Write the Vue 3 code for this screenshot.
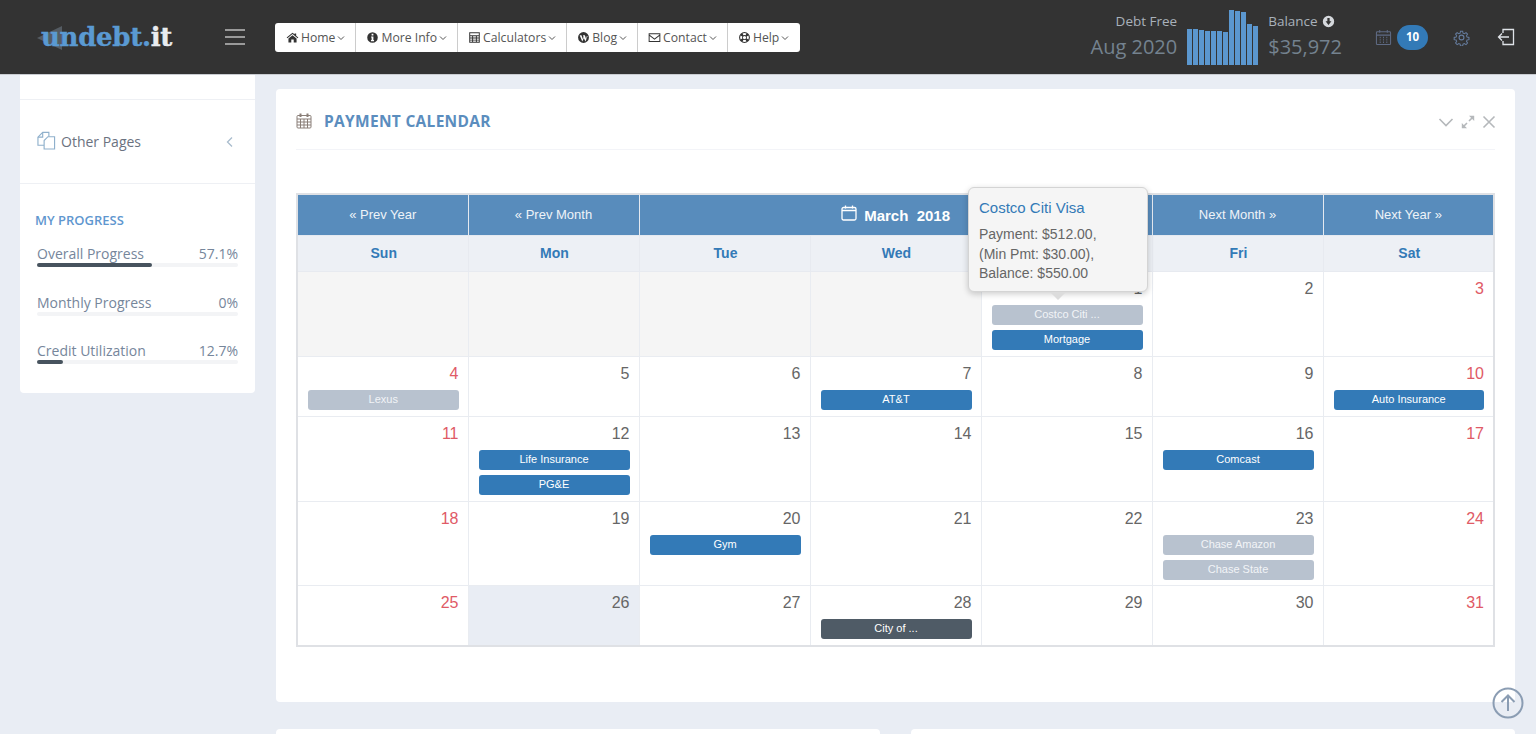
<template>
  <div class="page">
    <header class="topbar">
      <div class="logo"><span class="logo-blue">undebt.</span><span class="logo-white">it</span></div>
      <div class="burger"><span></span><span></span><span></span></div>
      <nav class="menu">
        <a v-for="item in menu" :key="item.label" class="menu-item">
          <svg class="menu-icon" viewBox="0 0 16 16"><path fill-rule="evenodd" :d="item.icon" /></svg>
          {{ item.label }}
          <svg class="caret" viewBox="0 0 8 6"><path d="M1 1.5l3 3 3-3" /></svg>
        </a>
      </nav>
      <div class="stats">
        <div class="stat stat-right">
          <div class="stat-label">Debt Free</div>
          <div class="stat-value">Aug 2020</div>
        </div>
        <div class="chart">
          <span v-for="(bar, index) in bars" :key="index" :style="{ height: bar + 'px' }"></span>
        </div>
        <div class="stat">
          <div class="stat-label">
            Balance
            <svg class="down-icon" viewBox="0 0 16 16"><path fill-rule="evenodd" d="M8 1a7 7 0 1 0 0 14A7 7 0 0 0 8 1zM6.600 3.800h2.800v4h2.200L8 12.200 4.400 7.800h2.200z" /></svg>
          </div>
          <div class="stat-value">$35,972</div>
        </div>
      </div>
      <div class="tools">
        <svg class="tool-cal" viewBox="0 0 18 18">
          <rect x="1.500" y="3" width="15" height="13.500" rx="1" />
          <path d="M1.500 6.500h15M5 1v3M13 1v3" />
          <path class="dots" d="M5 9h1M8.500 9h1M12 9h1M5 11.500h1M8.500 11.500h1M12 11.500h1M5 14h1M8.500 14h1M12 14h1" />
        </svg>
        <span class="badge">10</span>
        <svg class="tool-gear" viewBox="0 0 24 24">
          <circle cx="12" cy="12" r="3.400" />
          <path d="M10.300 2h3.400l.6 3 2.100.9 2.600-1.700 2.400 2.400-1.700 2.600.9 2.100 3 .6v3.400l-3 .6-.9 2.100 1.700 2.600-2.400 2.400-2.600-1.700-2.100.9-.6 3h-3.400l-.6-3-2.100-.9-2.600 1.700-2.400-2.400 1.700-2.600-.9-2.100-3-.6v-3.400l3-.6.9-2.100-1.700-2.600 2.400-2.400 2.600 1.700 2.100-.9z" transform="translate(1.300 1.300) scale(.9)" />
        </svg>
        <svg class="tool-exit" viewBox="0 0 18 18">
          <path d="M6 5V1.500h10.500v15H6V13M12 9H1.500M5 5.500L1.500 9 5 12.500" />
        </svg>
      </div>
    </header>

    <div class="content">
      <aside class="sidebar">
        <div class="side-spacer"></div>
        <div class="side-link">
          <svg class="pages-icon" viewBox="0 0 20 20">
            <path d="M12.500 6V1.500H6L1 6.500v8.500h6.500" />
            <path d="M6 1.500V6.500H1" />
            <path class="front" d="M11.500 6H18.500V19H7.500V10z" />
          </svg>
          <span>Other Pages</span>
          <svg class="side-chevron" viewBox="0 0 8 12"><path d="M6 1.500L1.500 6 6 10.500" /></svg>
        </div>
        <div class="progress-box">
          <h4>MY PROGRESS</h4>
          <div v-for="row in progress" :key="row.label" class="progress-row">
            <div class="progress-text"><span>{{ row.label }}</span><span>{{ row.value }}</span></div>
            <div class="progress-track"><div class="progress-fill" :style="{ width: row.width + '%' }"></div></div>
          </div>
        </div>
      </aside>

      <main class="main">
        <section class="panel">
          <div class="panel-head">
            <svg class="panel-cal" viewBox="0 0 16 16">
              <rect x="1" y="2.500" width="14" height="12.500" rx="1" />
              <path d="M1 6h14M1 9h14M1 12h14M4.500 6v9M8 6v9M11.500 6v9" />
              <path class="rings" d="M4.500 .5v3.500M11.500 .5v3.500" />
            </svg>
            <h2>PAYMENT CALENDAR</h2>
            <div class="panel-tools">
              <svg width="16" height="16" viewBox="0 0 16 16"><path d="M1.500 5l6.500 6.500L14.500 5" /></svg>
              <svg width="14" height="14" viewBox="0 0 14 14"><path d="M8 6l4.500-4.500M2 12l4-4" /><path class="solid" d="M8 .8h5.200V6zM.8 8v5.200H6z" /></svg>
              <svg width="14" height="14" viewBox="0 0 14 14"><path d="M1.500 1.500l11 11M12.500 1.500l-11 11" /></svg>
            </div>
          </div>

          <div class="calendar-wrap">
            <table class="calendar">
              <thead>
                <tr class="nav-row">
                  <th>« Prev Year</th>
                  <th>« Prev Month</th>
                  <th colspan="3" class="month">
                    <svg class="month-icon" viewBox="0 0 16 16">
                      <rect x="1" y="2.500" width="14" height="12.500" rx="1.500" />
                      <path d="M1 5.500h14M4.500 .5v3M11.500 .5v3" />
                    </svg>
                    March &nbsp;2018
                  </th>
                  <th>Next Month »</th>
                  <th>Next Year »</th>
                </tr>
                <tr class="day-row">
                  <th v-for="day in days" :key="day">{{ day }}</th>
                </tr>
              </thead>
              <tbody>
                <tr v-for="(week, w) in weeks" :key="w">
                  <td
                    v-for="(cell, c) in week"
                    :key="c"
                    :class="{ empty: !cell.day, today: cell.day === 26, weekend: c === 0 || c === 6 }"
                  >
                    <div class="num">{{ cell.day }}</div>
                    <div v-for="ev in cell.events" :key="ev.name" class="event" :class="ev.type">{{ ev.name }}</div>
                  </td>
                </tr>
              </tbody>
            </table>

            <div class="popover">
              <h3>Costco Citi Visa</h3>
              <p>Payment: $512.00,<br />(Min Pmt: $30.00),<br />Balance: $550.00</p>
            </div>
          </div>
        </section>

        <div class="lower">
          <section class="lower-card"></section>
          <section class="lower-card"></section>
        </div>
      </main>
    </div>

    <a class="to-top">
      <svg viewBox="0 0 32 32"><circle cx="16" cy="16" r="14.500" /><path d="M16 24V9M9.500 15L16 8.500l6.500 6.500" /></svg>
    </a>
  </div>
</template>

<script setup>
const menu = [
  { label: 'Home', icon: 'M8 2L.8 8l.9 1L8 3.800 14.300 9l.9-1L12.500 5.800V3h-2v1.100zM3 9.300L8 5.200l5 4.100V14H9.500v-3.500h-3V14H3z' },
  { label: 'More Info', icon: 'M8 1.500a6.500 6.500 0 1 0 0 13 6.500 6.500 0 0 0 0-13zM6.900 3.500h2.200v2H6.900zM6.300 6.700h2.800v4.400h.8v1.400H6.100v-1.400h.8V8.100h-.6z' },
  { label: 'Calculators', icon: 'M1.500 1.500h13v13h-13zM2.700 2.700v2.600h10.600V2.700zM2.700 6.500v1.600h2.400V6.500zM6.300 6.500v1.600h3.400V6.500zM10.900 6.500v1.600h2.400V6.500zM2.700 9.100v1.600h2.400V9.100zM6.300 9.100v1.600h3.400V9.100zM10.900 9.100v1.600h2.400V9.100zM2.700 11.700v1.600h2.400v-1.600zM6.300 11.700v1.600h3.400v-1.600zM10.900 11.700v1.600h2.400v-1.600z' },
  { label: 'Blog', icon: 'M8 1.300a6.700 6.700 0 1 0 0 13.400A6.700 6.700 0 0 0 8 1.300zM3.300 5.200h2.200l1.600 4.700.9-2.600-.6-2.100h2.300l1.500 4.700.9-3.700h1L10.400 13 8.400 8.700 6.500 13z' },
  { label: 'Contact', icon: 'M.8 2.800h14.400v10.700H.8zM2 4v.7l6 4.500 6-4.500V4zM2 6.200v6.100h12V6.200l-6 4.500z' },
  { label: 'Help', icon: 'M8 1.300a6.700 6.700 0 1 0 0 13.400A6.700 6.700 0 0 0 8 1.300zM5.600 3.200A5.400 5.400 0 0 1 10.400 3.200L9.300 5.300A3 3 0 0 0 6.700 5.300zM12.800 5.600A5.400 5.400 0 0 1 12.800 10.400L10.700 9.300A3 3 0 0 0 10.700 6.700zM10.400 12.800A5.400 5.400 0 0 1 5.600 12.800L6.700 10.700A3 3 0 0 0 9.300 10.700zM3.200 10.400A5.400 5.400 0 0 1 3.200 5.600L5.300 6.700A3 3 0 0 0 5.300 9.300zM8 6a2 2 0 1 0 0 4 2 2 0 0 0 0-4z' },
];

const bars = [36, 36, 35, 34, 34, 34, 33, 55, 54, 53, 41, 39];

const progress = [
  { label: 'Overall Progress', value: '57.1%', width: 57.1 },
  { label: 'Monthly Progress', value: '0%', width: 0 },
  { label: 'Credit Utilization', value: '12.7%', width: 12.7 },
];

const days = ['Sun', 'Mon', 'Tue', 'Wed', 'Thu', 'Fri', 'Sat'];

const paid = (name) => ({ name, type: 'paid' });
const due = (name) => ({ name, type: 'due' });

const events = {
  1: [paid('Costco Citi ...'), due('Mortgage')],
  4: [paid('Lexus')],
  7: [due('AT&T')],
  10: [due('Auto Insurance')],
  12: [due('Life Insurance'), due('PG&E')],
  16: [due('Comcast')],
  20: [due('Gym')],
  23: [paid('Chase Amazon'), paid('Chase State')],
  28: [{ name: 'City of ...', type: 'dark' }],
};

// March 2018 starts on a Thursday
const weeks = [];
for (let w = 0; w < 5; w++) {
  const week = [];
  for (let c = 0; c < 7; c++) {
    const n = w * 7 + c - 3;
    week.push(n > 0 ? { day: n, events: events[n] || [] } : { day: null, events: [] });
  }
  weeks.push(week);
}
</script>

<style>
html,
body {
  margin: 0;
  height: 734px;
  overflow: hidden;
  background: #e9edf4;
}
</style>

<style scoped>
.page {
  height: 734px;
  overflow: hidden;
  font-family: "Open Sans", "Liberation Sans", sans-serif;
  background: #e9edf4;
}

.topbar {
  display: flex;
  align-items: center;
  height: 75px;
  background: #333;
  border-bottom: 1px solid #c9ccd1;
  box-sizing: border-box;
}

.logo {
  position: relative;
  margin-left: 41px;
  width: 184px;
  font-family: "DejaVu Serif", serif;
  font-weight: 700;
  font-size: 26px;
  letter-spacing: -0.3px;
  -webkit-text-stroke: 0.4px;
}

/* faint arrow behind the first letters */
.logo::before {
  content: "";
  position: absolute;
  left: -4px;
  top: 4px;
  border-top: 12px solid transparent;
  border-bottom: 12px solid transparent;
  border-right: 25px solid #555c63;
}

.logo-blue,
.logo-white {
  position: relative;
}

.logo-blue {
  color: #5a9ad3;
}

.logo-white {
  color: #e9ecf0;
}

.burger {
  display: flex;
  flex-direction: column;
  gap: 5px;
  width: 20px;
  margin-right: 30px;
}

.burger span {
  height: 2px;
  background: #9a9a9a;
}

.menu {
  display: flex;
  height: 29px;
  margin-top: 1px;
  background: #fff;
  border-radius: 3px;
}

.menu-item {
  display: flex;
  align-items: center;
  gap: 2px;
  padding: 0 10px;
  font-size: 12.2px;
  color: #555;
  border-left: 1px solid #ccc;
}

.menu-item:first-child {
  padding-left: 11px;
  border-left: none;
}

.menu-item:last-child {
  padding-right: 11px;
}

.menu-icon {
  width: 13px;
  height: 13px;
  fill: #333;
}

.caret {
  width: 8px;
  height: 6px;
  fill: none;
  stroke: #555;
  stroke-width: 1;
}

.stats {
  display: flex;
  align-items: flex-end;
  margin-left: auto;
  height: 56px;
}

.stat {
  padding-bottom: 3px;
  color: #9aa5b1;
}

.stat-right {
  text-align: right;
}

.stat-label {
  font-size: 13.5px;
  line-height: 22px;
  color: #a9b1ba;
}

.stat-value {
  font-size: 20px;
  line-height: 30px;
  color: #74828f;
}

.down-icon {
  width: 13px;
  height: 13px;
  fill: #d5d8dc;
  margin-left: 1px;
  vertical-align: -2px;
}

.chart {
  display: flex;
  align-items: flex-end;
  gap: 1px;
  height: 55px;
  margin: 0 10px;
}

.chart span {
  width: 5px;
  background: #5b97cf;
}

.tools {
  display: flex;
  align-items: center;
  margin-left: 33px;
  margin-right: 21px;
}

.tool-cal {
  width: 17px;
  height: 17px;
  fill: none;
  stroke: #5f6b85;
  stroke-width: 1.1;
}

.tool-cal .dots {
  stroke-width: 1.4;
}

.badge {
  width: 31px;
  height: 25px;
  margin-left: 5px;
  border-radius: 13px;
  background: #337ab7;
  color: #fff;
  font-size: 11.5px;
  font-weight: 700;
  line-height: 24px;
  text-align: center;
}

.tool-gear {
  width: 17px;
  height: 17px;
  margin-left: 25px;
  fill: none;
  stroke: #657c9e;
  stroke-width: 1.6;
}

.tool-exit {
  width: 18px;
  height: 18px;
  margin-left: 27px;
  fill: none;
  stroke: #dfe3e8;
  stroke-width: 1.3;
}

.content {
  display: flex;
  align-items: flex-start;
  gap: 21px;
  padding: 0 21px 0 20px;
}

.sidebar {
  flex: 0 0 235px;
  height: 318px;
  background: #fff;
  border-radius: 0 0 4px 4px;
}

.side-spacer {
  height: 24px;
  border-bottom: 1px solid #eef0f4;
}

.side-link {
  display: flex;
  align-items: center;
  height: 83px;
  padding: 0 21px 0 17px;
  border-bottom: 1px solid #eef0f4;
  font-size: 14px;
  color: #6b7280;
}

.side-link span {
  flex: 1;
  margin-left: 5px;
}

.pages-icon {
  width: 19px;
  height: 19px;
  margin-top: -3px;
  fill: none;
  stroke: #8fb0cc;
  stroke-width: 1.2;
}

.pages-icon .front {
  fill: #fff;
}

.side-chevron {
  width: 8px;
  height: 12px;
  fill: none;
  stroke: #a9bccd;
  stroke-width: 1.3;
}

.progress-box {
  padding: 28px 17px 0;
}

.progress-box h4 {
  margin: 0 0 15px -2px;
  font-size: 13px;
  line-height: 17px;
  font-weight: 600;
  color: #5f97cf;
}

.progress-row {
  margin-bottom: 25.5px;
}

.progress-text {
  display: flex;
  justify-content: space-between;
  font-size: 14px;
  line-height: 19px;
  color: #76869b;
}

.progress-track {
  height: 4px;
  background: #f3f4f6;
  border-radius: 2px;
}

.progress-fill {
  height: 4px;
  background: #47535e;
  border-radius: 2px;
}

.main {
  flex: 1;
  padding-top: 14px;
}

.panel {
  height: 613px;
  padding: 0 20px;
  background: #fff;
  border-radius: 4px;
  box-sizing: border-box;
}

.panel-head {
  display: flex;
  align-items: center;
  height: 61px;
  padding-top: 3px;
  box-sizing: border-box;
  border-bottom: 1px solid #f3f4f8;
}

.panel-cal {
  width: 16px;
  height: 16px;
  fill: none;
  stroke: #8a7f78;
  stroke-width: 1;
}

.panel-cal .rings {
  stroke-width: 2;
}

.panel-head h2 {
  margin: 0 0 0 12px;
  font-size: 15.5px;
  font-weight: 700;
  letter-spacing: 0.3px;
  color: #5b8dbe;
}

.panel-tools {
  display: flex;
  align-items: center;
  gap: 7px;
  margin-left: auto;
  margin-right: -1px;
  margin-top: 2px;
}

.panel-tools svg {
  fill: none;
  stroke: #b5b8bb;
  stroke-width: 1.6;
}

.panel-tools .solid {
  fill: #b5b8bb;
  stroke: none;
}

.calendar-wrap {
  position: relative;
  margin-top: 43px;
}

.calendar {
  width: 1199px;
  table-layout: fixed;
  border-collapse: collapse;
  border: 2px solid #dfe1e5;
  font-family: "Liberation Sans", Arial, sans-serif;
}

.nav-row th {
  height: 38px;
  padding: 0 0 2px;
  background: #588cbc;
  border: 1px solid #e4e9f0;
  color: #eef3f8;
  font-size: 13px;
  font-weight: 400;
}

.nav-row .month {
  font-size: 15px;
  font-weight: 700;
  color: #fff;
}

.month-icon {
  width: 16px;
  height: 16px;
  margin-right: 3px;
  fill: none;
  stroke: #fff;
  stroke-width: 1.3;
  vertical-align: 0;
}

.day-row th {
  height: 33px;
  padding: 0 0 2px 2px;
  background: #edf0f5;
  border: 1px solid #e7eaf0;
  color: #337ab7;
  font-size: 14px;
  font-weight: 700;
}

td {
  padding: 7px 9px 6px 10px;
  border: 1px solid #e9ecf1;
  vertical-align: top;
  background: #fff;
}

tbody tr:nth-child(4) td {
  padding-bottom: 5px;
}

td.empty {
  background: #f5f5f5;
}

td.today {
  background: #e9edf4;
}

.num {
  height: 25px;
  padding-top: 1px;
  text-align: right;
  font-size: 16px;
  line-height: 18px;
  color: #666;
}

td.weekend .num {
  color: #e05a66;
}

.event {
  height: 20px;
  margin-bottom: 5px;
  border-radius: 3px;
  color: #fff;
  font-size: 11px;
  line-height: 19px;
  text-align: center;
}

.event:last-child {
  margin-bottom: 0;
}

.event.due {
  background: #337ab7;
}

.event.paid {
  background: #b8c2cf;
  color: #f2f4f7;
}

.event.dark {
  background: #4f5b66;
}

.popover {
  position: absolute;
  left: 672px;
  top: -6px;
  width: 180px;
  height: 105px;
  padding: 11px 10px;
  box-sizing: border-box;
  background: #f5f5f5;
  border: 1px solid #d4d4d4;
  border-radius: 6px;
  box-shadow: 0 2px 6px rgba(0, 0, 0, 0.2);
  font-family: "Liberation Sans", Arial, sans-serif;
}

.popover::after {
  content: "";
  position: absolute;
  left: 81px;
  bottom: -9px;
  border-left: 8px solid transparent;
  border-right: 8px solid transparent;
  border-top: 8px solid #dcdcdc;
}

.popover h3 {
  margin: 0 0 8px;
  font-size: 15px;
  line-height: 18px;
  font-weight: 400;
  color: #337ab7;
}

.popover p {
  margin: 0;
  font-size: 14px;
  line-height: 19.5px;
  color: #666;
}

.lower {
  display: flex;
  gap: 31px;
  margin-top: 27px;
}

.lower-card {
  flex: 1;
  height: 60px;
  background: #fff;
  border-radius: 4px;
}

.to-top {
  position: fixed;
  left: 1492px;
  top: 687px;
  width: 32px;
  height: 32px;
}

.to-top svg {
  display: block;
  fill: none;
  stroke: #8b9db3;
  stroke-width: 2;
}
</style>
